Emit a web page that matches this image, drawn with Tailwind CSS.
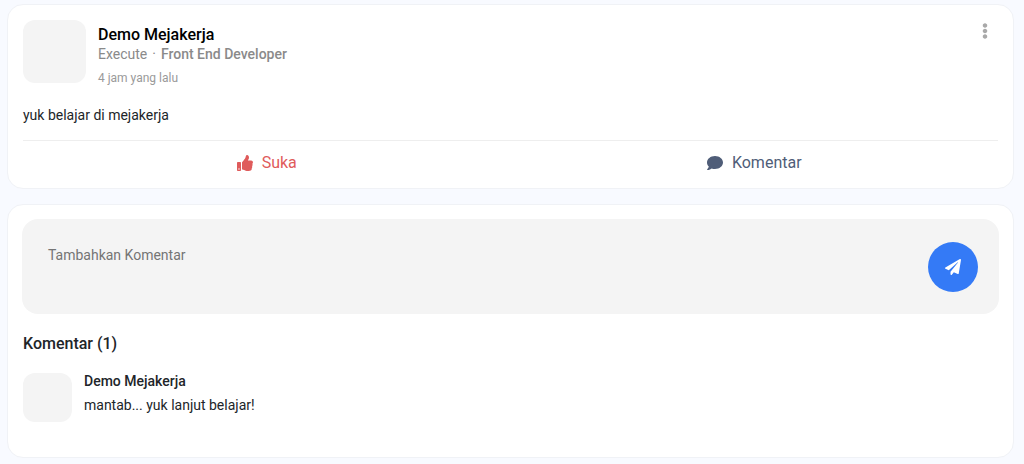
<!DOCTYPE html>
<html lang="id">
<head>
<meta charset="utf-8">
<meta name="viewport" content="width=device-width, initial-scale=1">
<title>Mejakerja</title>
<script src="https://cdn.jsdelivr.net/npm/@tailwindcss/browser@4"></script>
</head>
<body class="min-h-screen bg-[#f8faff] font-['Roboto',sans-serif] text-sm text-[#212529]">
<main class="flex flex-col gap-[15px] pt-1 pr-[10px] pb-[5px] pl-[7px]">
  <article class="rounded-2xl border border-[#f0f2f6] bg-white px-[15px] pt-[15px] pb-[11px]">
    <header class="flex items-start">
      <div class="size-[63px] shrink-0 rounded-xl bg-[#f4f4f4]"></div>
      <div class="ml-3 grow pt-[5px]">
        <h1 class="text-base leading-5 font-medium text-black">Demo Mejakerja</h1>
        <p class="flex gap-[5px] leading-[18px] text-[#8a8a8a]"><span>Execute</span><span>·</span><span class="font-medium">Front End Developer</span></p>
        <p class="mt-[5px] text-xs leading-5 text-[#9a9a9a]">4 jam yang lalu</p>
      </div>
      <button type="button" aria-label="Opsi" class="mt-[3px] mr-[10px] text-[#a9a9a9]">
        <svg class="h-4 w-[6px]" viewBox="0 0 192 512" fill="currentColor"><path d="M96 184c39.8 0 72 32.2 72 72s-32.2 72-72 72-72-32.2-72-72 32.2-72 72-72zM24 80c0 39.8 32.2 72 72 72s72-32.2 72-72S135.8 8 96 8 24 40.2 24 80zm0 352c0 39.8 32.2 72 72 72s72-32.2 72-72-32.2-72-72-72-72 32.2-72 72z"/></svg>
      </button>
    </header>
    <p class="mt-[17px] leading-5">yuk belajar di mejakerja</p>
    <div class="mt-[15px] grid grid-cols-2 border-t border-[#eeeeee] pt-2 text-base leading-7">
      <button type="button" class="flex items-center justify-center gap-[9px] text-[#df5b5b]">
        <svg class="size-4" viewBox="0 0 512 512" fill="currentColor"><path d="M104 224H24c-13.255 0-24 10.745-24 24v240c0 13.255 10.745 24 24 24h80c13.255 0 24-10.745 24-24V248c0-13.255-10.745-24-24-24zM64 472c-13.255 0-24-10.745-24-24s10.745-24 24-24 24 10.745 24 24-10.745 24-24 24zM384 81.452c0 42.416-25.97 66.208-33.277 94.548h101.723c33.397 0 59.397 27.746 59.553 58.098.084 17.938-7.546 37.249-19.439 49.197l-.11.11c9.836 23.337 8.237 56.037-9.308 79.469 8.681 25.895-.069 57.704-16.382 74.757 4.298 17.598 2.244 32.575-6.148 44.632C440.202 511.587 389.616 512 346.839 512l-2.845-.001c-48.287-.017-87.806-17.598-119.56-31.725-15.957-7.099-36.821-15.887-52.651-16.178-6.54-.12-11.783-5.457-11.783-11.998v-213.77c0-3.2 1.282-6.271 3.558-8.521 39.614-39.144 56.648-80.587 89.117-113.111 14.804-14.832 20.188-37.236 25.393-58.902C282.515 39.293 291.817 0 312 0c24 0 72 8 72 81.452z"/></svg>
        Suka
      </button>
      <button type="button" class="flex items-center justify-center gap-[9px] text-[#4f5d78]">
        <svg class="size-4" viewBox="0 0 512 512" fill="currentColor"><path d="M256 32C114.6 32 0 125.1 0 240c0 49.6 21.4 95 57 130.7C44.5 421.1 2.7 466 2.2 466.5c-2.2 2.3-2.8 5.7-1.5 8.7S4.8 480 8 480c66.3 0 116-31.8 140.6-51.4 32.7 12.3 69 19.4 107.4 19.4 141.4 0 256-93.1 256-208S397.4 32 256 32z"/></svg>
        Komentar
      </button>
    </div>
  </article>

  <section class="rounded-2xl border border-[#f0f2f6] bg-white px-[14px] pt-[14px] pb-[35px]">
    <form class="flex items-center rounded-2xl bg-[#f4f4f4] pr-[21px]">
      <textarea aria-label="Tambahkan Komentar" placeholder="Tambahkan Komentar" class="block h-[95px] grow resize-none bg-transparent pt-[26px] pl-[26px] leading-5 outline-none placeholder:text-[#757575]"></textarea>
      <button type="submit" aria-label="Kirim" class="flex size-[50px] items-center justify-center rounded-full bg-[#347af6] text-white">
        <svg class="size-4" viewBox="0 0 512 512" fill="currentColor"><path d="M476 3.2L12.5 270.6c-18.1 10.4-15.8 35.6 2.2 43.2L121 358.4l287.3-253.2c5.5-4.9 13.3 2.6 8.6 8.3L176 407v80.5c0 23.6 28.5 32.9 42.5 15.8L282 426l124.6 52.2c14.2 6 30.4-2.9 33-18.2l72-432C515 7.8 493.3-6.8 476 3.2z"/></svg>
      </button>
    </form>
    <h2 class="mt-5 ml-px text-base leading-5 font-medium">Komentar (1)</h2>
    <div class="mt-[19px] ml-px flex">
      <div class="size-[49px] shrink-0 rounded-xl bg-[#f4f4f4]"></div>
      <div class="ml-3 leading-6">
        <h3 class="-mt-1 font-medium">Demo Mejakerja</h3>
        <p>mantab... yuk lanjut belajar!</p>
      </div>
    </div>
  </section>
</main>
</body>
</html>
